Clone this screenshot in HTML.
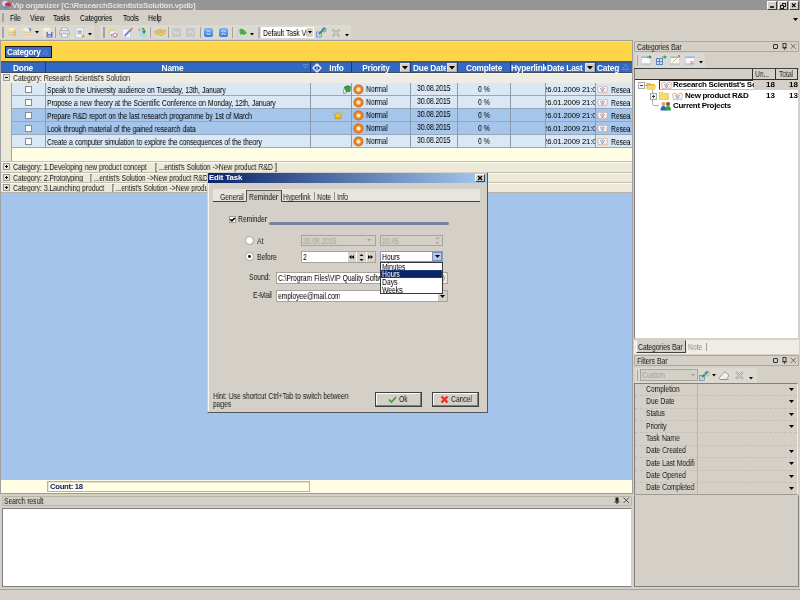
<!DOCTYPE html>
<html><head><meta charset="utf-8">
<style>
*{box-sizing:border-box;margin:0;padding:0}
html,body{width:800px;height:600px;overflow:hidden}
body{position:relative;background:#d4d0c8;font-family:"Liberation Sans",sans-serif;font-size:7.7px;letter-spacing:-0.45px;color:#000}
.a{position:absolute}
.t{position:absolute;white-space:nowrap;line-height:10px;font-size:8.4px;letter-spacing:-0.15px;word-spacing:0.4px;transform:scaleX(0.822);transform-origin:0 0;will-change:transform}
.t.n{font-size:7.7px;letter-spacing:-0.45px;word-spacing:0;transform:none}
.b{font-weight:bold}
.w{color:#fff}
svg{position:absolute;overflow:visible}
</style></head><body>
<!-- TITLE BAR -->
<div class="a" style="left:0;top:0;width:800px;height:10px;background:#959595"></div>
<svg style="left:1px;top:0" width="11" height="10"><circle cx="4" cy="3.5" r="2.8" fill="#e8d0e0"/><ellipse cx="7" cy="4.5" rx="3" ry="2" fill="#c03040"/><circle cx="5" cy="7.5" r="2.2" fill="#7090c0"/></svg>
<div class="t b n" style="left:12px;top:1px;color:#e0e0e0;font-size:8px;letter-spacing:-0.25px">Vip organizer [C:\ResearchScientistsSolution.vpdb]</div>
<div class="a" style="left:767px;top:1px;width:10px;height:9px;background:#d4d0c8;border:1px solid;border-color:#fff #404040 #404040 #fff"></div>
<div class="a" style="left:770px;top:6px;width:4px;height:1.5px;background:#303030"></div>
<div class="a" style="left:778px;top:1px;width:10px;height:9px;background:#d4d0c8;border:1px solid;border-color:#fff #404040 #404040 #fff"></div>
<div class="a" style="left:782px;top:2.5px;width:4px;height:4px;border:1px solid #202020;border-top-width:1.5px"></div>
<div class="a" style="left:780px;top:4.5px;width:4px;height:4px;border:1px solid #202020;border-top-width:1.5px;background:#d4d0c8"></div>
<div class="a" style="left:789px;top:1px;width:10px;height:9px;background:#d4d0c8;border:1px solid;border-color:#fff #404040 #404040 #fff"></div>
<svg style="left:789px;top:1px" width="10" height="9"><path d="M3 2.5L6.5 6M6.5 2.5L3 6" stroke="#101010" stroke-width="1.2"/></svg>

<!-- MENU BAR -->
<div class="a" style="left:2px;top:13px;width:2px;height:9px;background:#a8a49c"></div>
<div class="t" style="left:10px;top:13px">File</div>
<div class="t" style="left:30px;top:13px">View</div>
<div class="t" style="left:53px;top:13px">Tasks</div>
<div class="t" style="left:80px;top:13px">Categories</div>
<div class="t" style="left:123px;top:13px">Tools</div>
<div class="t" style="left:148px;top:13px">Help</div>
<svg style="left:793px;top:18px" width="6" height="4"><path d="M0 0H5L2.5 3Z" fill="#000"/></svg>

<!-- TOOLBAR -->
<div class="a" style="left:0;top:25px;width:94px;height:14px;background:#dcd9d1"></div>
<div class="a" style="left:100px;top:25px;width:251px;height:14px;background:#dcd9d1"></div>
<div class="a" style="left:2px;top:27px;width:2px;height:11px;background:#a8a49c"></div>
<div class="a" style="left:103px;top:27px;width:2px;height:11px;background:#a8a49c"></div>
<!-- db icons -->
<svg style="left:7px;top:27px" width="10" height="11"><rect x="1" y="1" width="8" height="9" rx="2.5" fill="#eadcb0"/><rect x="6" y="1.5" width="3" height="8" rx="1.5" fill="#d8c890"/><ellipse cx="4.5" cy="2.3" rx="3.5" ry="1.4" fill="#f8f0d0"/><circle cx="2.5" cy="3" r="1.4" fill="#f8f060"/><path d="M1 5Q5 6.5 9 5M1 7.5Q5 9 9 7.5" stroke="#c8b478" stroke-width="0.6" fill="none"/></svg>
<svg style="left:22px;top:27px" width="10" height="11"><rect x="1" y="1" width="8" height="9" rx="2.5" fill="#ece2c4"/><ellipse cx="4.5" cy="2.3" rx="3.5" ry="1.4" fill="#faf4e0"/><path d="M1 5Q5 6.5 9 5M1 7.5Q5 9 9 7.5" stroke="#c8b478" stroke-width="0.6" fill="none"/><path d="M6 0.5L9.5 2L8.5 5Z" fill="#6a8ac8"/></svg>
<svg style="left:35px;top:31px" width="5" height="3"><path d="M0 0H4L2 2.5Z" fill="#000"/></svg>
<svg style="left:42px;top:27px" width="11" height="11"><rect x="1" y="1" width="8" height="9" rx="2.5" fill="#ece2c4"/><ellipse cx="4.5" cy="2.3" rx="3.5" ry="1.4" fill="#faf4e0"/><rect x="4.5" y="5" width="6" height="5.5" fill="#6878b8"/><rect x="6" y="5" width="3" height="2" fill="#e0e4f4"/><rect x="6.5" y="8" width="2" height="2" fill="#c0c8e8"/></svg>
<div class="a" style="left:55px;top:27px;width:1px;height:11px;background:#a8a49c"></div>
<svg style="left:59px;top:27px" width="11" height="11"><rect x="2.5" y="1" width="6" height="3" fill="#fafafa" stroke="#909090" stroke-width="0.6"/><rect x="0.5" y="3.5" width="10" height="4.5" rx="1" fill="#d8dce4" stroke="#909498" stroke-width="0.6"/><rect x="2.5" y="7" width="6" height="3" fill="#fff" stroke="#909090" stroke-width="0.6"/></svg>
<svg style="left:75px;top:27px" width="10" height="11"><rect x="1" y="1" width="7.5" height="9.5" fill="#f8f8fa" stroke="#b0b8c8" stroke-width="0.6"/><rect x="2.5" y="3" width="4.5" height="4.5" fill="#a8d0e8"/><path d="M2.5 4.5H7M2.5 6H7" stroke="#70a0c8" stroke-width="0.5"/><circle cx="8" cy="9" r="1.5" fill="#e0a060"/></svg>
<svg style="left:88px;top:33px" width="5" height="3"><path d="M0 0H4L2 2.5Z" fill="#000"/></svg>
<!-- second toolbar -->
<svg style="left:108px;top:27px" width="11" height="11"><path d="M0.5 1.5H3.5L4.5 2.5H7V6H0.5Z" fill="#f0d878"/><rect x="2" y="4" width="7.5" height="6.5" fill="#f8f8fc" stroke="#b0b8d0" stroke-width="0.5"/><circle cx="7" cy="8" r="2" fill="none" stroke="#e05060" stroke-width="0.9"/><rect x="3" y="7" width="1.5" height="2.5" fill="#7090d0"/></svg>
<svg style="left:122px;top:27px" width="12" height="11"><rect x="0.5" y="2" width="8" height="8.5" fill="#f4f6fc" stroke="#b8c4dc" stroke-width="0.6"/><path d="M2.5 9L9 2.5" stroke="#7a88b8" stroke-width="2"/><path d="M8.5 3L10.5 1" stroke="#f08040" stroke-width="1.6"/></svg>
<svg style="left:137px;top:27px" width="11" height="11"><path d="M2.5 5.5H9.5L8.5 10.5H3.5Z" fill="#a8d8f4"/><path d="M1 3L3 1.5M2 4L4 2.5" stroke="#7090d0" stroke-width="0.8"/><path d="M5 1.5Q8 1.5 7 5M5.5 4L7 6L8.5 4" stroke="#30a040" stroke-width="1.3" fill="none"/></svg>
<div class="a" style="left:150px;top:27px;width:1px;height:11px;background:#a8a49c"></div>
<svg style="left:154px;top:28px" width="12" height="9"><path d="M0.5 3.5L5 1.5L11.5 2.5L11 5.5L8 6.5L7 8L5.5 6.5L1.5 6Z" fill="#eed070" stroke="#b89838" stroke-width="0.6"/><path d="M3 4L9 4" stroke="#a08020" stroke-width="0.6"/></svg>
<div class="a" style="left:168px;top:27px;width:1px;height:11px;background:#a8a49c"></div>
<div class="a" style="left:172px;top:28px;width:9px;height:9px;background:#c8c8c8;border-radius:1px"></div>
<svg style="left:172px;top:28px" width="9" height="9"><path d="M2 3.5L4.5 6L7 3.5" stroke="#f0f0f0" stroke-width="1" fill="none"/></svg>
<div class="a" style="left:186px;top:28px;width:9px;height:9px;background:#c8c8c8;border-radius:1px"></div>
<svg style="left:186px;top:28px" width="9" height="9"><path d="M2 5.5L4.5 3L7 5.5" stroke="#f0f0f0" stroke-width="1" fill="none"/></svg>
<div class="a" style="left:200px;top:27px;width:1px;height:11px;background:#a8a49c"></div>
<div class="a" style="left:204px;top:28px;width:9px;height:9px;background:linear-gradient(#80b8f0,#3a78d0);border-radius:2px"></div>
<svg style="left:204px;top:28px" width="9" height="9"><path d="M2.5 2L4.5 4L6.5 2M2.5 5L4.5 7L6.5 5" stroke="#fff" stroke-width="0.9" fill="none"/></svg>
<div class="a" style="left:219px;top:28px;width:9px;height:9px;background:linear-gradient(#80b8f0,#3a78d0);border-radius:2px"></div>
<svg style="left:219px;top:28px" width="9" height="9"><path d="M2.5 4L4.5 2L6.5 4M2.5 7L4.5 5L6.5 7" stroke="#fff" stroke-width="0.9" fill="none"/></svg>
<div class="a" style="left:232px;top:27px;width:1px;height:11px;background:#a8a49c"></div>
<svg style="left:236px;top:27px" width="12" height="11"><path d="M1 10L3.5 2Q7 0.5 11 6L8 8Q5 6.5 3.5 8Z" fill="#48b048"/><path d="M1 10L3.5 2L4 9Z" fill="#e8f0e8" stroke="#a0b0a0" stroke-width="0.4"/></svg>
<svg style="left:250px;top:33px" width="5" height="3"><path d="M0 0H4L2 2.5Z" fill="#000"/></svg>
<div class="a" style="left:258px;top:27px;width:2px;height:11px;background:#b8b4ac"></div>
<div class="a" style="left:261px;top:27px;width:53px;height:11px;background:#fff"></div>
<div class="t" style="left:263px;top:28px">Default Task Vi</div>
<div class="a" style="left:307px;top:28px;width:6px;height:9px;background:#d4d0c8"></div>
<svg style="left:308px;top:31px" width="5" height="3"><path d="M0 0H4L2 2.5Z" fill="#000"/></svg>
<svg style="left:316px;top:27px" width="11" height="11"><rect x="0.5" y="5" width="5" height="5" fill="#c8d0f0" stroke="#6070c0" stroke-width="0.6"/><path d="M3 7L9 1" stroke="#40a040" stroke-width="2"/><circle cx="8" cy="3" r="2" fill="none" stroke="#4080d0" stroke-width="0.8"/></svg>
<svg style="left:331px;top:28px" width="10" height="10"><path d="M1.5 1.5L8.5 8.5M8.5 1.5L1.5 8.5" stroke="#a8a8a8" stroke-width="2.4"/><path d="M1.8 1.8L8.2 8.2M8.2 1.8L1.8 8.2" stroke="#e4e4e4" stroke-width="0.8"/></svg>
<svg style="left:345px;top:34px" width="5" height="3"><path d="M0 0H4L2 2.5Z" fill="#000"/></svg>
<svg style="left:0;top:0" width="0" height="0"><defs><radialGradient id="og"><stop offset="0" stop-color="#fff6e6"/><stop offset="0.3" stop-color="#ffe0b0"/><stop offset="0.5" stop-color="#f09038"/><stop offset="0.85" stop-color="#dc7418"/><stop offset="1" stop-color="#c86414"/></radialGradient></defs></svg>
<div class="a" style="left:0;top:40px;width:633px;height:453px;background:#a0a0a0"></div>
<div class="a" style="left:1px;top:41px;width:631px;height:1px;background:#f4e090"></div>
<div class="a" style="left:1px;top:42px;width:631px;height:19px;background:#fdd546"></div>
<div class="a" style="left:5px;top:46px;width:47px;height:12px;background:#3a6cc4;border:1px solid #141414"></div>
<div class="t b w n" style="left:7px;top:47px;font-size:8.3px;letter-spacing:-0.3px">Category</div>
<svg style="left:42px;top:49px" width="7" height="6"><path d="M1 5L3.5 1L6 5Z" fill="none" stroke="#6a88c0" stroke-width="0.8"/></svg>
<div class="a" style="left:1px;top:61px;width:631px;height:1px;background:#5c5a44"></div>
<div class="a" style="left:1px;top:62px;width:631px;height:1px;background:#3a5a8a"></div>
<div class="a" style="left:1px;top:63px;width:631px;height:9px;background:#3169c5"></div>
<div class="a" style="left:1px;top:72px;width:631px;height:1px;background:#3a4a62"></div>
<div class="a" style="left:1px;top:73px;width:631px;height:1px;background:#f8f7f0"></div>
<div class="a" style="left:45px;top:62px;width:1px;height:11px;background:#1a3a80"></div>
<div class="a" style="left:310px;top:62px;width:1px;height:11px;background:#1a3a80"></div>
<div class="a" style="left:351px;top:62px;width:1px;height:11px;background:#1a3a80"></div>
<div class="a" style="left:410px;top:62px;width:1px;height:11px;background:#1a3a80"></div>
<div class="a" style="left:457px;top:62px;width:1px;height:11px;background:#1a3a80"></div>
<div class="a" style="left:510px;top:62px;width:1px;height:11px;background:#1a3a80"></div>
<div class="a" style="left:545px;top:62px;width:1px;height:11px;background:#1a3a80"></div>
<div class="a" style="left:595px;top:62px;width:1px;height:11px;background:#1a3a80"></div>
<div class="t b w n" style="left:1px;top:63px;width:44px;text-align:center;overflow:hidden;font-size:8.3px;letter-spacing:-0.2px">Done</div>
<div class="t b w n" style="left:46px;top:63px;width:253px;text-align:center;overflow:hidden;font-size:8.3px;letter-spacing:-0.2px">Name</div>
<div class="t b w n" style="left:322px;top:63px;width:29px;text-align:center;overflow:hidden;font-size:8.3px;letter-spacing:-0.2px">Info</div>
<div class="t b w n" style="left:352px;top:63px;width:48px;text-align:center;overflow:hidden;font-size:8.3px;letter-spacing:-0.2px">Priority</div>
<div class="t b w n" style="left:413px;top:63px;width:33px;overflow:hidden;font-size:8.3px;letter-spacing:-0.2px">Due Date</div>
<div class="t b w n" style="left:458px;top:63px;width:52px;text-align:center;overflow:hidden;font-size:8.3px;letter-spacing:-0.2px">Complete</div>
<div class="t b w n" style="left:511px;top:63px;width:35px;overflow:hidden;font-size:8.3px;letter-spacing:-0.2px">Hyperlink</div>
<div class="t b w n" style="left:547px;top:63px;width:37px;overflow:hidden;font-size:8.3px;letter-spacing:-0.2px">Date Last</div>
<div class="t b w n" style="left:597px;top:63px;width:23px;overflow:hidden;font-size:8.3px;letter-spacing:-0.2px">Categ</div>
<svg style="left:303px;top:64px" width="5" height="5"><path d="M0 0.5H4.5L2.25 4Z" fill="none" stroke="#7090c8" stroke-width="0.7"/></svg>
<svg style="left:312px;top:63px" width="10" height="10"><path d="M5 1L9 5L5 9L1 5Z" fill="#1e4aa0" stroke="#e8eefc" stroke-width="1.5" stroke-linejoin="round"/><rect x="4.5" y="3" width="1" height="4" fill="#e8eefc"/></svg>
<div class="a" style="left:400px;top:63px;width:10px;height:9px;background:#d4d0c8;border:1px solid #e4e2dc;border-right-color:#b0aca4;border-bottom-color:#b0aca4"></div>
<svg style="left:402px;top:66px" width="6" height="4"><path d="M0 0H6L3 3.5Z" fill="#000"/></svg>
<div class="a" style="left:447px;top:63px;width:10px;height:9px;background:#d4d0c8;border:1px solid #e4e2dc;border-right-color:#b0aca4;border-bottom-color:#b0aca4"></div>
<svg style="left:449px;top:66px" width="6" height="4"><path d="M0 0H6L3 3.5Z" fill="#000"/></svg>
<div class="a" style="left:585px;top:63px;width:10px;height:9px;background:#d4d0c8;border:1px solid #e4e2dc;border-right-color:#b0aca4;border-bottom-color:#b0aca4"></div>
<svg style="left:587px;top:66px" width="6" height="4"><path d="M0 0H6L3 3.5Z" fill="#000"/></svg>
<svg style="left:622px;top:64px" width="7" height="6"><path d="M0.5 5.5L3.5 0.5L6.5 5.5Z" fill="none" stroke="#7090c8" stroke-width="0.8"/></svg>
<div class="a" style="left:1px;top:74px;width:631px;height:9px;background:#efede3"></div>
<div class="a" style="left:3px;top:74px;width:7px;height:7px;background:#e8e4dc;border:1px solid #9a9a94"></div><div class="a" style="left:5px;top:77px;width:3px;height:1px;background:#000"></div>
<div class="t" style="left:13px;top:73px;color:#202020">Category: Research Scientist's Solution</div>
<div class="a" style="left:1px;top:83px;width:10px;height:78px;background:#ece9d8"></div>
<div class="a" style="left:11px;top:83px;width:1px;height:78px;background:#a0a0a0"></div>
<div class="a" style="left:12px;top:83px;width:620px;height:13px;background:#dae7f5"></div>
<div class="a" style="left:12px;top:95px;width:620px;height:1px;background:#98a8bc"></div>
<div class="a" style="left:25px;top:86px;width:7px;height:7px;background:#fff;border:1px solid #8a8a8a"></div>
<div class="t" style="left:47px;top:85px">Speak to the University audience on Tuesday, 13th, January</div>
<svg style="left:342px;top:85px" width="9" height="9"><path d="M1.5 8.5L2.5 2Q5 0 8.5 1.5L8 6.5Q5.5 5.5 3.5 8Z" fill="#38a048" stroke="#1a6a28" stroke-width="0.6"/><path d="M1.5 8.5L2.5 3L4 7.5Z" fill="#f0f4f0"/></svg>
<svg style="left:353px;top:84px" width="11" height="11"><circle cx="5.5" cy="5.5" r="5" fill="url(#og)"/></svg>
<div class="t" style="left:366px;top:84px">Normal</div>
<div class="t" style="left:417px;top:83px">30.08.2015</div>
<div class="t" style="left:478px;top:84px">0 %</div>
<div class="a" style="left:546px;top:83px;width:49px;height:12px;overflow:hidden"><div class="t n" style="left:-3px;top:2px;letter-spacing:-0.15px">26.01.2009 21:09</div></div>
<svg style="left:597px;top:85px" width="11" height="9"><path d="M0.5 2Q3 0 5.5 2.5Q8 0 10.5 2L9.5 8Q7.5 6.5 5.5 8Q3.5 6.5 1.5 8Z" fill="#f8f8fc" stroke="#e8a078" stroke-width="0.8"/><path d="M3.5 3L5.5 7L7.5 3" stroke="#6890d0" stroke-width="0.9" fill="none"/><circle cx="5.5" cy="4" r="1.2" fill="#a8c8f0"/></svg>
<div class="a" style="left:611px;top:83px;width:20px;height:12px;overflow:hidden"><div class="t" style="left:0;top:2px">Resea</div></div>
<div class="a" style="left:12px;top:96px;width:620px;height:13px;background:#dae7f5"></div>
<div class="a" style="left:12px;top:108px;width:620px;height:1px;background:#98a8bc"></div>
<div class="a" style="left:25px;top:99px;width:7px;height:7px;background:#fff;border:1px solid #8a8a8a"></div>
<div class="t" style="left:47px;top:98px">Propose a new theory at the Scientific Conference on Monday, 12th, January</div>
<svg style="left:353px;top:97px" width="11" height="11"><circle cx="5.5" cy="5.5" r="5" fill="url(#og)"/></svg>
<div class="t" style="left:366px;top:97px">Normal</div>
<div class="t" style="left:417px;top:96px">30.08.2015</div>
<div class="t" style="left:478px;top:97px">0 %</div>
<div class="a" style="left:546px;top:96px;width:49px;height:12px;overflow:hidden"><div class="t n" style="left:-3px;top:2px;letter-spacing:-0.15px">26.01.2009 21:09</div></div>
<svg style="left:597px;top:98px" width="11" height="9"><path d="M0.5 2Q3 0 5.5 2.5Q8 0 10.5 2L9.5 8Q7.5 6.5 5.5 8Q3.5 6.5 1.5 8Z" fill="#f8f8fc" stroke="#e8a078" stroke-width="0.8"/><path d="M3.5 3L5.5 7L7.5 3" stroke="#6890d0" stroke-width="0.9" fill="none"/><circle cx="5.5" cy="4" r="1.2" fill="#a8c8f0"/></svg>
<div class="a" style="left:611px;top:96px;width:20px;height:12px;overflow:hidden"><div class="t" style="left:0;top:2px">Resea</div></div>
<div class="a" style="left:12px;top:109px;width:620px;height:13px;background:#a6c5ea"></div>
<div class="a" style="left:12px;top:121px;width:620px;height:1px;background:#98a8bc"></div>
<div class="a" style="left:25px;top:112px;width:7px;height:7px;background:#fff;border:1px solid #8a8a8a"></div>
<div class="t" style="left:47px;top:111px">Prepare R&amp;D report on the last research programme by 1st of March</div>
<svg style="left:332px;top:110px" width="12" height="11"><path d="M3 8Q3 3 6 2.5Q9 3 9 8Z" fill="#f0c830" stroke="#a08020" stroke-width="0.5"/><rect x="2.5" y="8" width="7" height="1" fill="#c8a020"/><path d="M1 2L2.5 3M11 2L9.5 3M0.5 5H2M11.5 5H10M6 0V1.5" stroke="#d0a020" stroke-width="0.6"/></svg>
<svg style="left:353px;top:110px" width="11" height="11"><circle cx="5.5" cy="5.5" r="5" fill="url(#og)"/></svg>
<div class="t" style="left:366px;top:110px">Normal</div>
<div class="t" style="left:417px;top:109px">30.08.2015</div>
<div class="t" style="left:478px;top:110px">0 %</div>
<div class="a" style="left:546px;top:109px;width:49px;height:12px;overflow:hidden"><div class="t n" style="left:-3px;top:2px;letter-spacing:-0.15px">26.01.2009 21:09</div></div>
<svg style="left:597px;top:111px" width="11" height="9"><path d="M0.5 2Q3 0 5.5 2.5Q8 0 10.5 2L9.5 8Q7.5 6.5 5.5 8Q3.5 6.5 1.5 8Z" fill="#f8f8fc" stroke="#e8a078" stroke-width="0.8"/><path d="M3.5 3L5.5 7L7.5 3" stroke="#6890d0" stroke-width="0.9" fill="none"/><circle cx="5.5" cy="4" r="1.2" fill="#a8c8f0"/></svg>
<div class="a" style="left:611px;top:109px;width:20px;height:12px;overflow:hidden"><div class="t" style="left:0;top:2px">Resea</div></div>
<div class="a" style="left:12px;top:122px;width:620px;height:13px;background:#a6c5ea"></div>
<div class="a" style="left:12px;top:134px;width:620px;height:1px;background:#98a8bc"></div>
<div class="a" style="left:25px;top:125px;width:7px;height:7px;background:#fff;border:1px solid #8a8a8a"></div>
<div class="t" style="left:47px;top:124px">Look through material of the gained research data</div>
<svg style="left:353px;top:123px" width="11" height="11"><circle cx="5.5" cy="5.5" r="5" fill="url(#og)"/></svg>
<div class="t" style="left:366px;top:123px">Normal</div>
<div class="t" style="left:417px;top:122px">30.08.2015</div>
<div class="t" style="left:478px;top:123px">0 %</div>
<div class="a" style="left:546px;top:122px;width:49px;height:12px;overflow:hidden"><div class="t n" style="left:-3px;top:2px;letter-spacing:-0.15px">26.01.2009 21:09</div></div>
<svg style="left:597px;top:124px" width="11" height="9"><path d="M0.5 2Q3 0 5.5 2.5Q8 0 10.5 2L9.5 8Q7.5 6.5 5.5 8Q3.5 6.5 1.5 8Z" fill="#f8f8fc" stroke="#e8a078" stroke-width="0.8"/><path d="M3.5 3L5.5 7L7.5 3" stroke="#6890d0" stroke-width="0.9" fill="none"/><circle cx="5.5" cy="4" r="1.2" fill="#a8c8f0"/></svg>
<div class="a" style="left:611px;top:122px;width:20px;height:12px;overflow:hidden"><div class="t" style="left:0;top:2px">Resea</div></div>
<div class="a" style="left:12px;top:135px;width:620px;height:13px;background:#dae7f5"></div>
<div class="a" style="left:12px;top:147px;width:620px;height:1px;background:#98a8bc"></div>
<div class="a" style="left:25px;top:138px;width:7px;height:7px;background:#fff;border:1px solid #8a8a8a"></div>
<div class="t" style="left:47px;top:137px">Create a computer simulation to explore the consequences of the theory</div>
<svg style="left:353px;top:136px" width="11" height="11"><circle cx="5.5" cy="5.5" r="5" fill="url(#og)"/></svg>
<div class="t" style="left:366px;top:136px">Normal</div>
<div class="t" style="left:417px;top:135px">30.08.2015</div>
<div class="t" style="left:478px;top:136px">0 %</div>
<div class="a" style="left:546px;top:135px;width:49px;height:12px;overflow:hidden"><div class="t n" style="left:-3px;top:2px;letter-spacing:-0.15px">26.01.2009 21:09</div></div>
<svg style="left:597px;top:137px" width="11" height="9"><path d="M0.5 2Q3 0 5.5 2.5Q8 0 10.5 2L9.5 8Q7.5 6.5 5.5 8Q3.5 6.5 1.5 8Z" fill="#f8f8fc" stroke="#e8a078" stroke-width="0.8"/><path d="M3.5 3L5.5 7L7.5 3" stroke="#6890d0" stroke-width="0.9" fill="none"/><circle cx="5.5" cy="4" r="1.2" fill="#a8c8f0"/></svg>
<div class="a" style="left:611px;top:135px;width:20px;height:12px;overflow:hidden"><div class="t" style="left:0;top:2px">Resea</div></div>
<div class="a" style="left:310px;top:83px;width:1px;height:65px;background:#8c9cb0"></div>
<div class="a" style="left:351px;top:83px;width:1px;height:65px;background:#8c9cb0"></div>
<div class="a" style="left:410px;top:83px;width:1px;height:65px;background:#8c9cb0"></div>
<div class="a" style="left:457px;top:83px;width:1px;height:65px;background:#8c9cb0"></div>
<div class="a" style="left:510px;top:83px;width:1px;height:65px;background:#8c9cb0"></div>
<div class="a" style="left:545px;top:83px;width:1px;height:65px;background:#8c9cb0"></div>
<div class="a" style="left:595px;top:83px;width:1px;height:65px;background:#8c9cb0"></div>
<div class="a" style="left:45px;top:83px;width:1px;height:65px;background:#8c9cb0"></div>
<div class="a" style="left:12px;top:148px;width:620px;height:13px;background:#fffde4"></div>
<div class="a" style="left:1px;top:161px;width:631px;height:32px;background:#ece9d8"></div>
<div class="a" style="left:1px;top:161px;width:631px;height:1px;background:#c4c0b0"></div>
<div class="a" style="left:1px;top:162px;width:631px;height:1px;background:#faf9f4"></div>
<div class="a" style="left:3px;top:163px;width:7px;height:7px;background:#e8e4dc;border:1px solid #9a9a94"></div><div class="a" style="left:5px;top:166px;width:3px;height:1px;background:#000"></div><div class="a" style="left:6px;top:165px;width:1px;height:3px;background:#000"></div>
<div class="t" style="left:13px;top:162px;color:#202020">Category: 1.Developing new product concept</div>
<div class="t" style="left:155px;top:162px;color:#202020">[ ...entist's Solution -&gt;New product R&amp;D ]</div>
<div class="a" style="left:1px;top:172px;width:631px;height:1px;background:#c4c0b0"></div>
<div class="a" style="left:1px;top:173px;width:631px;height:1px;background:#faf9f4"></div>
<div class="a" style="left:3px;top:174px;width:7px;height:7px;background:#e8e4dc;border:1px solid #9a9a94"></div><div class="a" style="left:5px;top:177px;width:3px;height:1px;background:#000"></div><div class="a" style="left:6px;top:176px;width:1px;height:3px;background:#000"></div>
<div class="t" style="left:13px;top:173px;color:#202020">Category: 2.Prototyping</div>
<div class="t" style="left:90px;top:173px;color:#202020">[ ...entist's Solution -&gt;New product R&amp;D ]</div>
<div class="a" style="left:1px;top:182px;width:631px;height:1px;background:#c4c0b0"></div>
<div class="a" style="left:1px;top:183px;width:631px;height:1px;background:#faf9f4"></div>
<div class="a" style="left:3px;top:184px;width:7px;height:7px;background:#e8e4dc;border:1px solid #9a9a94"></div><div class="a" style="left:5px;top:187px;width:3px;height:1px;background:#000"></div><div class="a" style="left:6px;top:186px;width:1px;height:3px;background:#000"></div>
<div class="t" style="left:13px;top:183px;color:#202020">Category: 3.Launching product</div>
<div class="t" style="left:112px;top:183px;color:#202020">[ ...entist's Solution -&gt;New product R&amp;D ]</div>
<div class="a" style="left:1px;top:192px;width:631px;height:1px;background:#b4b4a8"></div>
<div class="a" style="left:1px;top:193px;width:631px;height:287px;background:#a4c4ec"></div>
<div class="a" style="left:1px;top:480px;width:631px;height:13px;background:#fffde4"></div>
<div class="a" style="left:47px;top:481px;width:263px;height:11px;background:#fffde4;border:1px solid #b4b4a4;box-shadow:inset 1px 1px 0 #e4e4d4"></div>
<div class="t b n" style="left:50px;top:482px;color:#0a1a6a;letter-spacing:-0.3px">Count: 18</div>
<div class="a" style="left:634px;top:41px;width:165px;height:11px;background:#d4d0c8;border:1px solid #aca89e;border-radius:1px"></div>
<div class="t" style="left:637px;top:42px;color:#202020">Categories Bar</div>
<div class="a" style="left:773px;top:44px;width:5px;height:5px;border:1px solid #303030;border-radius:1px"></div>
<svg style="left:782px;top:43px" width="6" height="7"><rect x="1" y="0.5" width="3" height="4" fill="none" stroke="#303030" stroke-width="0.9"/><rect x="0.5" y="4.5" width="4.5" height="0.9" fill="#303030"/><rect x="2.2" y="5" width="0.8" height="2" fill="#303030"/></svg>
<svg style="left:790px;top:43px" width="7" height="7"><path d="M0.8 0.8L5.8 5.8M5.8 0.8L0.8 5.8" stroke="#505050" stroke-width="0.8"/></svg>
<div class="a" style="left:635px;top:53px;width:70px;height:15px;background:#dcd9d1"></div>
<div class="a" style="left:637px;top:55px;width:1px;height:11px;background:#a8a49c"></div>
<svg style="left:641px;top:55px" width="11" height="10"><rect x="0.5" y="1.5" width="9" height="8" fill="#f8fafc" stroke="#b8c4d4" stroke-width="0.5"/><rect x="0.5" y="1.5" width="9" height="1.5" fill="#90b8e8"/><rect x="0.5" y="8.5" width="9" height="1" fill="#a8b0b8"/><path d="M6 2H9.5M8.3 0.6L10 2L8.3 3.4" stroke="#30a040" stroke-width="1.1" fill="none"/></svg>
<svg style="left:655px;top:55px" width="12" height="11"><rect x="1" y="3" width="7" height="7" fill="#d0e0f4"/><path d="M1 3.5H8M1 6.5H8M1 9.5H8M1.5 3V10M4.5 3V10M7.5 3V10" stroke="#6088c8" stroke-width="1"/><path d="M7 2H10.5M9.3 0.6L11 2L9.3 3.4" stroke="#30a040" stroke-width="1.1" fill="none"/></svg>
<svg style="left:670px;top:55px" width="11" height="11"><rect x="0.5" y="1.5" width="9" height="8" fill="#f8fafc" stroke="#b8c4d4" stroke-width="0.5"/><rect x="0.5" y="1.5" width="9" height="1.5" fill="#90b8e8"/><rect x="0.5" y="8.5" width="9" height="1" fill="#a8b0b8"/><path d="M2.5 7.5L8.5 1.5" stroke="#d8b040" stroke-width="0.9"/><circle cx="9" cy="1" r="0.9" fill="#e05050"/></svg>
<svg style="left:685px;top:55px" width="11" height="11"><rect x="0.5" y="1.5" width="9" height="8" fill="#f8fafc" stroke="#b8c4d4" stroke-width="0.5"/><rect x="0.5" y="1.5" width="9" height="1.5" fill="#90b8e8"/><rect x="0.5" y="8.5" width="9" height="1" fill="#a8b0b8"/><path d="M5.5 6L8.5 9M8.5 6L5.5 9" stroke="#f07070" stroke-width="1"/></svg>
<svg style="left:699px;top:61px" width="5" height="3"><path d="M0 0H4L2 2.5Z" fill="#000"/></svg>
<div class="a" style="left:634px;top:68px;width:165px;height:271px;background:#fff;border:1px solid #808080;border-right-color:#d4d0c8;border-bottom-color:#d4d0c8"></div>
<div class="a" style="left:634px;top:68px;width:164px;height:1px;background:#404040"></div>
<div class="a" style="left:635px;top:69px;width:163px;height:10px;background:#d4d0c8"></div>
<div class="a" style="left:635px;top:79px;width:163px;height:1px;background:#303030"></div>
<div class="a" style="left:797px;top:68px;width:1px;height:12px;background:#303030"></div>
<div class="a" style="left:752px;top:69px;width:1px;height:10px;background:#303030"></div>
<div class="a" style="left:775px;top:69px;width:1px;height:10px;background:#303030"></div>
<div class="t" style="left:755px;top:69px;color:#303030">Un...</div>
<div class="t" style="left:779px;top:69px;color:#303030">Total</div>
<div class="a" style="left:753px;top:80px;width:45px;height:10px;background:#d4d0c8"></div>
<div class="a" style="left:659px;top:80px;width:94px;height:10px;background:#fff;border:1px solid #303030;border-right:none;border-bottom-color:#c0c0c0"></div>
<div class="a" style="left:638px;top:82px;width:7px;height:7px;background:#f4f4f4;border:1px solid #a8a8a8"></div><div class="a" style="left:640px;top:85px;width:3px;height:1px;background:#404040"></div>
<div class="a" style="left:645px;top:85px;width:2px;height:1px;background:#a0a0a0"></div>
<div class="a" style="left:652px;top:89px;width:1px;height:16px;background:#b0b0b0"></div>
<div class="a" style="left:653px;top:105px;width:6px;height:1px;background:#b0b0b0"></div>
<svg style="left:646px;top:82px" width="11" height="8"><path d="M0.5 1H4L5 2H9V7.5H0.5Z" fill="#e0b840"/><path d="M2 3.5H10.5L9 7.5H0.5Z" fill="#f8d868"/></svg>
<div class="a" style="left:650px;top:93px;width:7px;height:7px;background:#f4f4f4;border:1px solid #a8a8a8"></div><div class="a" style="left:652px;top:96px;width:3px;height:1px;background:#404040"></div><div class="a" style="left:653px;top:95px;width:1px;height:3px;background:#404040"></div>
<svg style="left:659px;top:92px" width="10" height="8"><path d="M0.5 0.5H4L5 1.5H9.5V7.5H0.5Z" fill="#f8dc70" stroke="#d0a838" stroke-width="0.5"/></svg>
<svg style="left:661px;top:81px" width="11" height="9"><path d="M0.5 2Q3 0 5.5 2.5Q8 0 10.5 2L9.5 8Q7.5 6.5 5.5 8Q3.5 6.5 1.5 8Z" fill="#f8f8fc" stroke="#e8a078" stroke-width="0.8"/><path d="M3.5 3L5.5 7L7.5 3" stroke="#6890d0" stroke-width="0.9" fill="none"/><circle cx="5.5" cy="4" r="1.2" fill="#a8c8f0"/></svg>
<svg style="left:672px;top:92px" width="11" height="9"><path d="M0.5 2Q3 0 5.5 2.5Q8 0 10.5 2L9.5 8Q7.5 6.5 5.5 8Q3.5 6.5 1.5 8Z" fill="#f8f8fc" stroke="#e8a078" stroke-width="0.8"/><path d="M3.5 3L5.5 7L7.5 3" stroke="#6890d0" stroke-width="0.9" fill="none"/><circle cx="5.5" cy="4" r="1.2" fill="#a8c8f0"/></svg>
<svg style="left:660px;top:101px" width="12" height="10"><circle cx="3.5" cy="3" r="2" fill="#e0a050"/><path d="M0.5 9.5Q0.5 5 3.5 5Q6.5 5 6.5 9.5Z" fill="#3060c0"/><circle cx="8" cy="3" r="2" fill="#905020"/><path d="M5 9.5Q5 5 8 5Q11 5 11 9.5Z" fill="#30a040"/></svg>
<div class="a" style="left:672px;top:80px;width:82px;height:10px;overflow:hidden"><div class="t b n" style="left:1px;top:0;font-size:8px;letter-spacing:-0.3px">Research Scientist's Solution</div></div>
<div class="t b n" style="left:685px;top:91px;font-size:8px;letter-spacing:-0.3px">New product R&amp;D</div>
<div class="t b n" style="left:673px;top:101px;font-size:8px;letter-spacing:-0.3px">Current Projects</div>
<div class="t b n" style="left:754px;top:80px;width:21px;text-align:right;font-size:8px;letter-spacing:0">18</div>
<div class="t b n" style="left:776px;top:80px;width:22px;text-align:right;font-size:8px;letter-spacing:0">18</div>
<div class="t b n" style="left:754px;top:91px;width:21px;text-align:right;font-size:8px;letter-spacing:0">13</div>
<div class="t b n" style="left:776px;top:91px;width:22px;text-align:right;font-size:8px;letter-spacing:0">13</div>
<div class="a" style="left:634px;top:340px;width:165px;height:14px;background:#f0ece4"></div>
<div class="a" style="left:636px;top:340px;width:50px;height:13px;background:#d4d0c8;border:1px solid;border-color:#d4d0c8 #404040 #404040 #fff"></div>
<div class="t" style="left:638px;top:342px;color:#202020">Categories Bar</div>
<div class="t" style="left:688px;top:342px;color:#909090">Note</div>
<div class="a" style="left:706px;top:343px;width:1px;height:8px;background:#a0a0a0"></div>
<div class="a" style="left:634px;top:355px;width:165px;height:11px;background:#d4d0c8;border:1px solid #aca89e;border-radius:1px"></div>
<div class="t" style="left:637px;top:356px;color:#202020">Filters Bar</div>
<div class="a" style="left:773px;top:358px;width:5px;height:5px;border:1px solid #303030;border-radius:1px"></div>
<svg style="left:782px;top:357px" width="6" height="7"><rect x="1" y="0.5" width="3" height="4" fill="none" stroke="#303030" stroke-width="0.9"/><rect x="0.5" y="4.5" width="4.5" height="0.9" fill="#303030"/><rect x="2.2" y="5" width="0.8" height="2" fill="#303030"/></svg>
<svg style="left:790px;top:357px" width="7" height="7"><path d="M0.8 0.8L5.8 5.8M5.8 0.8L0.8 5.8" stroke="#505050" stroke-width="0.8"/></svg>
<div class="a" style="left:635px;top:368px;width:122px;height:15px;background:#dcd9d1"></div>
<div class="a" style="left:637px;top:370px;width:1px;height:11px;background:#a8a49c"></div>
<div class="a" style="left:640px;top:369px;width:58px;height:12px;background:#d4d0c8;border:1px solid #a8a49c"></div>
<div class="t" style="left:642px;top:370px;color:#a0a0a0">Custom</div>
<svg style="left:691px;top:374px" width="5" height="3"><path d="M0 0H4L2 2.5Z" fill="#a0a0a0"/></svg>
<svg style="left:699px;top:370px" width="12" height="11"><rect x="0.5" y="5.5" width="5" height="5" fill="#c8d0f0" stroke="#6070c0" stroke-width="0.6"/><path d="M3 7L9 1.5" stroke="#40a040" stroke-width="2"/><circle cx="8" cy="3.5" r="2.5" fill="none" stroke="#80b0e0" stroke-width="0.8"/></svg>
<svg style="left:712px;top:374px" width="5" height="3"><path d="M0 0H4L2 2.5Z" fill="#000"/></svg>
<svg style="left:718px;top:371px" width="12" height="9"><path d="M1 7L6 1.5Q7 0.5 8 1.5L10.5 4Q11 5 10 6L7.5 8.5H2Z" fill="#f0f0f0" stroke="#808080" stroke-width="0.7"/><path d="M3 8.5H11" stroke="#808080" stroke-width="0.6"/></svg>
<svg style="left:735px;top:371px" width="9" height="9"><path d="M1 1L8 8M8 1L1 8" stroke="#a8a8a8" stroke-width="2.4"/><path d="M1.3 1.3L7.7 7.7M7.7 1.3L1.3 7.7" stroke="#e4e4e4" stroke-width="0.8"/></svg>
<svg style="left:749px;top:377px" width="5" height="3"><path d="M0 0H4L2 2.5Z" fill="#000"/></svg>
<div class="a" style="left:634px;top:383px;width:164px;height:112px;background:#d4d0c8;border:1px solid #808080;border-right-color:#e8e8e8;border-bottom-color:#a09c94"></div>
<div class="t" style="left:646px;top:384px;color:#202020">Completion</div>
<svg style="left:789px;top:388px" width="6" height="4"><path d="M0 0H5L2.5 3Z" fill="#000"/></svg>
<div class="t" style="left:646px;top:396px;color:#202020">Due Date</div>
<div class="a" style="left:635px;top:395px;width:162px;height:1px;border-top:1px dashed #c4c0b8"></div>
<svg style="left:789px;top:400px" width="6" height="4"><path d="M0 0H5L2.5 3Z" fill="#000"/></svg>
<div class="t" style="left:646px;top:408px;color:#202020">Status</div>
<div class="a" style="left:635px;top:408px;width:162px;height:1px;border-top:1px dashed #c4c0b8"></div>
<svg style="left:789px;top:413px" width="6" height="4"><path d="M0 0H5L2.5 3Z" fill="#000"/></svg>
<div class="t" style="left:646px;top:421px;color:#202020">Priority</div>
<div class="a" style="left:635px;top:420px;width:162px;height:1px;border-top:1px dashed #c4c0b8"></div>
<svg style="left:789px;top:425px" width="6" height="4"><path d="M0 0H5L2.5 3Z" fill="#000"/></svg>
<div class="t" style="left:646px;top:433px;color:#202020">Task Name</div>
<div class="a" style="left:635px;top:432px;width:162px;height:1px;border-top:1px dashed #c4c0b8"></div>
<div class="t" style="left:646px;top:445px;color:#202020">Date Created</div>
<div class="a" style="left:635px;top:445px;width:162px;height:1px;border-top:1px dashed #c4c0b8"></div>
<svg style="left:789px;top:450px" width="6" height="4"><path d="M0 0H5L2.5 3Z" fill="#000"/></svg>
<div class="t" style="left:646px;top:458px;color:#202020">Date Last Modifi</div>
<div class="a" style="left:635px;top:457px;width:162px;height:1px;border-top:1px dashed #c4c0b8"></div>
<svg style="left:789px;top:462px" width="6" height="4"><path d="M0 0H5L2.5 3Z" fill="#000"/></svg>
<div class="t" style="left:646px;top:470px;color:#202020">Date Opened</div>
<div class="a" style="left:635px;top:470px;width:162px;height:1px;border-top:1px dashed #c4c0b8"></div>
<svg style="left:789px;top:475px" width="6" height="4"><path d="M0 0H5L2.5 3Z" fill="#000"/></svg>
<div class="t" style="left:646px;top:482px;color:#202020">Date Completed</div>
<div class="a" style="left:635px;top:482px;width:162px;height:1px;border-top:1px dashed #c4c0b8"></div>
<svg style="left:789px;top:487px" width="6" height="4"><path d="M0 0H5L2.5 3Z" fill="#000"/></svg>
<div class="a" style="left:697px;top:384px;width:1px;height:110px;background:#b8b4ac"></div>
<div class="a" style="left:634px;top:495px;width:165px;height:92px;background:#d4d0c8;border:1px solid;border-color:#d4d0c8 #808080 #808080 #808080"></div>
<!-- SEARCH RESULT -->
<div class="a" style="left:0;top:493px;width:633px;height:1px;background:#a09c94"></div>
<div class="a" style="left:2px;top:496px;width:630px;height:10px;background:#d4d0c8;border:1px solid #b8b4ac;border-radius:1px"></div>
<div class="t" style="left:4px;top:496px;color:#202020">Search result</div>
<svg style="left:614px;top:497px" width="6" height="7"><rect x="1.5" y="0.5" width="3" height="4" fill="#202020"/><rect x="0.5" y="4.5" width="5" height="1" fill="#202020"/><rect x="2.5" y="5" width="1" height="2" fill="#202020"/></svg>
<svg style="left:623px;top:497px" width="7" height="7"><path d="M0.5 0.5L6 6M6 0.5L0.5 6" stroke="#404040" stroke-width="0.9"/></svg>
<div class="a" style="left:2px;top:508px;width:630px;height:79px;background:#fff;border:1px solid;border-color:#808080 #d4d0c8 #808080 #808080"></div>
<!-- STATUS BAR -->
<div class="a" style="left:0;top:589px;width:800px;height:1px;background:#a8a49c"></div>
<div class="a" style="left:0;top:590px;width:800px;height:10px;background:#d4d0c8"></div>
<!-- DIALOG -->
<div class="a" style="left:207px;top:172px;width:281px;height:241px;background:#d4d0c8;border:1px solid;border-color:#d4d0c8 #505860 #505860 #d4d0c8"></div>
<div class="a" style="left:208px;top:173px;width:279px;height:239px;border:1px solid;border-color:#f4f4f0 #d4d0c8 #d4d0c8 #f4f4f0"></div>
<div class="a" style="left:208px;top:173px;width:279px;height:10px;background:linear-gradient(to right,#0a246a,#a6caf0)"></div>
<div class="t b w n" style="left:209px;top:173px;font-size:7.8px;letter-spacing:-0.1px">Edit Task</div>
<div class="a" style="left:475px;top:174px;width:10px;height:8px;background:#d4d0c8;border:1px solid;border-color:#fff #404040 #404040 #fff"></div>
<svg style="left:475px;top:174px" width="10" height="8"><path d="M3 2L7 6M7 2L3 6" stroke="#000" stroke-width="1.3"/></svg>
<!-- tabs -->
<div class="a" style="left:213px;top:189px;width:267px;height:13px;background:#e8e5de;border-bottom:1px solid #404040"></div>
<div class="a" style="left:213px;top:201px;width:33px;height:1px;background:#404040"></div>
<div class="t" style="left:220px;top:192px;color:#202020">General</div>
<div class="a" style="left:246px;top:190px;width:36px;height:12px;background:#d4d0c8;border:1px solid;border-color:#606060 #404040 #d4d0c8 #505050"></div>
<div class="t" style="left:249px;top:192px;color:#202020">Reminder</div>
<div class="t" style="left:283px;top:192px;color:#202020">Hyperlink</div>
<div class="a" style="left:314px;top:192px;width:1px;height:8px;background:#909090"></div>
<div class="t" style="left:317px;top:192px;color:#202020">Note</div>
<div class="a" style="left:334px;top:192px;width:1px;height:8px;background:#909090"></div>
<div class="t" style="left:337px;top:192px;color:#202020">Info</div>
<!-- reminder checkbox -->
<div class="a" style="left:229px;top:216px;width:7px;height:7px;background:#fff;border:1px solid #9c9c9c"></div>
<svg style="left:229px;top:216px" width="7" height="7"><path d="M1.3 3.3L2.9 4.9L5.8 2" stroke="#000" stroke-width="1.6" fill="none"/></svg>
<div class="t" style="left:238px;top:214px;color:#202020">Reminder</div>
<div class="a" style="left:269px;top:222px;width:180px;height:3px;background:#7a82a0;border-radius:1.5px"></div>
<!-- At -->
<svg style="left:245px;top:236px" width="9" height="9"><circle cx="4.5" cy="4.5" r="4" fill="#fff" stroke="#909090" stroke-width="0.8"/></svg>
<div class="t" style="left:257px;top:236px;color:#202020">At</div>
<div class="a" style="left:301px;top:235px;width:75px;height:11px;background:#d4d0c8;border:1px solid #a8a49c"></div>
<div class="t" style="left:303px;top:236px;color:#a8a49c">30.08.2015</div>
<svg style="left:367px;top:239px" width="5" height="3"><path d="M0 0H4L2 2.5Z" fill="#a8a49c"/></svg>
<div class="a" style="left:380px;top:235px;width:63px;height:11px;background:#d4d0c8;border:1px solid #a8a49c"></div>
<div class="t" style="left:382px;top:236px;color:#a8a49c">20:45</div>
<svg style="left:435px;top:236px" width="5" height="9"><path d="M0.5 3L2.5 1L4.5 3ZM0.5 6L2.5 8L4.5 6Z" fill="#a8a49c"/></svg>
<!-- Before -->
<svg style="left:245px;top:252px" width="9" height="9"><circle cx="4.5" cy="4.5" r="4" fill="#fff" stroke="#909090" stroke-width="0.8"/><circle cx="4.5" cy="4.5" r="1.4" fill="#000"/></svg>
<div class="t" style="left:257px;top:252px;color:#202020">Before</div>
<div class="a" style="left:301px;top:251px;width:75px;height:12px;background:#fff;border:1px solid #a8a49c"></div>
<div class="t" style="left:303px;top:252px">2</div>
<div class="a" style="left:348px;top:252px;width:8px;height:10px;background:#d8d4cc"></div>
<div class="a" style="left:357px;top:252px;width:9px;height:5px;background:#d8d4cc"></div>
<div class="a" style="left:357px;top:257px;width:9px;height:5px;background:#d8d4cc"></div>
<div class="a" style="left:367px;top:252px;width:8px;height:10px;background:#d8d4cc"></div>
<svg style="left:349px;top:255px" width="6" height="4"><path d="M0 2L2.5 0V4ZM2.5 2L5 0V4Z" fill="#000"/></svg>
<svg style="left:359px;top:253px" width="6" height="9"><path d="M0.5 3L2.5 1L4.5 3ZM0.5 6L2.5 8L4.5 6Z" fill="#000"/></svg>
<svg style="left:368px;top:255px" width="6" height="4"><path d="M0 0V4L2.5 2ZM2.5 0V4L5 2Z" fill="#000"/></svg>
<div class="a" style="left:380px;top:251px;width:63px;height:11px;background:#fff;border:1px solid #7f9db9"></div>
<div class="t" style="left:382px;top:252px">Hours</div>
<div class="a" style="left:432px;top:252px;width:10px;height:9px;background:#b8c8e8;border:1px solid #8090b0"></div>
<svg style="left:435px;top:255px" width="5" height="3"><path d="M0 0H5L2.5 3Z" fill="#000"/></svg>
<!-- Sound -->
<div class="t" style="left:249px;top:272px;color:#202020">Sound:</div>
<div class="a" style="left:276px;top:272px;width:172px;height:12px;background:#fff;border:1px solid #a8a49c"></div>
<div class="t" style="left:278px;top:273px">C:\Program Files\VIP Quality Software</div>
<div class="a" style="left:442px;top:273px;width:5px;height:10px;background:#e8e6e0"></div>
<svg style="left:442px;top:274px" width="5" height="8"><path d="M1 1Q4 4 1 7" stroke="#606060" stroke-width="0.7" fill="none"/></svg>
<!-- EMail -->
<div class="t" style="left:253px;top:290px;color:#202020">E-Mail</div>
<div class="a" style="left:276px;top:290px;width:172px;height:12px;background:#fff;border:1px solid #a8a49c"></div>
<div class="t" style="left:278px;top:291px">employee@mail.com</div>
<div class="a" style="left:438px;top:291px;width:9px;height:10px;background:#d4d0c8"></div>
<svg style="left:440px;top:295px" width="5" height="3"><path d="M0 0H5L2.5 3Z" fill="#000"/></svg>
<!-- dropdown list -->
<div class="a" style="left:380px;top:262px;width:63px;height:32px;background:#fff;border:1px solid #383838"></div>
<div class="a" style="left:381px;top:270px;width:61px;height:8px;background:#0a246a;border:1px dotted #3a4a88"></div>
<div class="t" style="left:382px;top:262px">Minutes</div>
<div class="t w" style="left:382px;top:269px">Hours</div>
<div class="t" style="left:382px;top:277px">Days</div>
<div class="t" style="left:382px;top:285px">Weeks</div>
<!-- hint -->
<div class="t" style="left:213px;top:391px;color:#202020">Hint: Use shortcut Ctrl+Tab to switch between</div>
<div class="t" style="left:213px;top:399px;color:#202020">pages</div>
<!-- buttons -->
<div class="a" style="left:375px;top:392px;width:47px;height:15px;background:#d4d0c8;border:1px solid #404040;box-shadow:inset -1px -1px 0 #808080, inset 1px 1px 0 #fff"></div>
<svg style="left:388px;top:396px" width="9" height="7"><path d="M1 3.5L3.5 6L8 1" stroke="#30a040" stroke-width="1.6" fill="none"/></svg>
<div class="t" style="left:399px;top:394px;color:#202020">Ok</div>
<div class="a" style="left:432px;top:392px;width:47px;height:15px;background:#d4d0c8;border:1px solid #404040;box-shadow:inset -1px -1px 0 #808080, inset 1px 1px 0 #fff"></div>
<svg style="left:440px;top:395px" width="9" height="9"><path d="M1.5 1.5L7.5 7.5M7.5 1.5L1.5 7.5" stroke="#e03020" stroke-width="2.2"/></svg>
<div class="t" style="left:451px;top:394px;color:#202020">Cancel</div>

</body></html>
